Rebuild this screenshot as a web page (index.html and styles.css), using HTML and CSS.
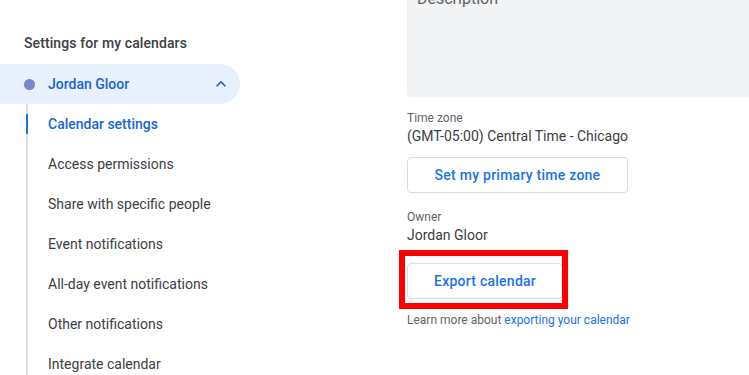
FILE: index.html
```html
<!DOCTYPE html>
<html lang="en">
<head>
<meta charset="utf-8">
<title>Calendar settings</title>
<link rel="stylesheet" href="styles.css">
</head>
<body>
<div class="page">
  <nav class="sidebar">
    <div class="side-heading">Settings for my calendars</div>
    <div class="cal-row">
      <span class="cal-left"><span class="cal-dot"></span><span class="cal-name">Jordan Gloor</span></span>
      <svg class="chev" width="20" height="20" viewBox="0 0 24 24" aria-hidden="true"><path d="M12 8l-6 6 1.41 1.41L12 10.83l4.59 4.58L18 14z" fill="#1967d2"/></svg>
    </div>
    <ul class="sublist">
      <li class="subitem active">Calendar settings</li>
      <li class="subitem">Access permissions</li>
      <li class="subitem">Share with specific people</li>
      <li class="subitem">Event notifications</li>
      <li class="subitem">All-day event notifications</li>
      <li class="subitem">Other notifications</li>
      <li class="subitem">Integrate calendar</li>
    </ul>
  </nav>
  <main class="main">
    <div class="desc-box"><span class="desc-placeholder">Description</span></div>
    <div class="field-label tz-label">Time zone</div>
    <div class="field-value">(GMT-05:00) Central Time - Chicago</div>
    <button class="btn btn-tz">Set my primary time zone</button>
    <div class="field-label owner-label">Owner</div>
    <div class="field-value">Jordan Gloor</div>
    <div class="export-wrap">
      <button class="btn btn-export">Export calendar</button>
      <span class="highlight-box"></span>
    </div>
    <div class="learn">Learn more about <a class="link" href="#">exporting your calendar</a></div>
  </main>
</div>
</body>
</html>
```
FILE: styles.css
```css
html, body {
  margin: 0;
  padding: 0;
  background: #ffffff;
  overflow: hidden;
}
body {
  font-family: Roboto, "Noto Sans", Arial, sans-serif;
  color: #3c4043;
  width: 749px;
  height: 375px;
}
.page {
  display: grid;
  grid-template-columns: 240px 342px;
  column-gap: 167px;
  align-items: start;
  height: 375px;
  overflow: hidden;
}
.sidebar {
  padding-top: 33px;
}
.side-heading {
  padding-left: 24px;
  font-size: 14px;
  font-weight: 500;
  line-height: 20px;
  color: #3c4043;
  letter-spacing: 0.1px;
  margin-bottom: 11px;
}
.cal-row {
  height: 40px;
  background: #e8f0fe;
  border-radius: 0 20px 20px 0;
  display: flex;
  align-items: center;
  justify-content: space-between;
  padding: 0 9px 0 24px;
}
.cal-left {
  display: flex;
  align-items: center;
}
.cal-dot {
  width: 11px;
  height: 11px;
  border-radius: 50%;
  background: #7986cb;
  margin-right: 13px;
}
.cal-name {
  font-size: 14px;
  font-weight: 500;
  color: #1967d2;
  line-height: 20px;
}
.chev {
  display: block;
}
.sublist {
  list-style: none;
  margin: 10px 0 0 26px;
  padding: 0;
  border-left: 2px solid #dadce0;
  height: 300px;
}
.subitem {
  position: relative;
  height: 40px;
  display: flex;
  align-items: center;
  padding-left: 20px;
  font-size: 14px;
  line-height: 20px;
  color: #3c4043;
}
.subitem:first-child {
  margin-top: -10px;
}
.subitem.active {
  color: #1967d2;
  font-weight: 500;
}
.subitem.active::before {
  content: "";
  position: absolute;
  left: -2px;
  top: 10px;
  width: 2px;
  height: 20px;
  background: #1a73e8;
}
.main {
  display: flex;
  flex-direction: column;
  align-items: flex-start;
}
.desc-box {
  box-sizing: border-box;
  width: 342px;
  height: 121px;
  margin-top: -24px;
  padding: 13px 10px 0;
  background: #f1f3f4;
  border-radius: 4px 0 0 4px;
}
.desc-placeholder {
  font-size: 16px;
  line-height: 20px;
  color: #5f6368;
}
.field-label {
  font-size: 12px;
  line-height: 16px;
  color: #5f6368;
}
.tz-label {
  margin-top: 13px;
}
.owner-label {
  margin-top: 16px;
}
.field-value {
  font-size: 14px;
  line-height: 20px;
  color: #3c4043;
}
.btn {
  box-sizing: border-box;
  height: 36px;
  padding: 0 24px;
  background: #ffffff;
  border: 1px solid #dadce0;
  border-radius: 4px;
  font-family: Roboto, "Noto Sans", Arial, sans-serif;
  font-size: 14px;
  font-weight: 500;
  letter-spacing: 0.25px;
  color: #1a73e8;
  cursor: pointer;
}
.btn-tz {
  width: 221px;
  margin-top: 11px;
}
.export-wrap {
  position: relative;
  margin-top: 18px;
}
.btn-export {
  display: block;
  width: 156px;
}
.highlight-box {
  position: absolute;
  left: -8px;
  top: -13px;
  width: 169px;
  height: 59px;
  box-sizing: border-box;
  border: 6px solid #ff0000;
}
.learn {
  margin-top: 13px;
  font-size: 12px;
  line-height: 16px;
  color: #5f6368;
}
.link {
  color: #1a73e8;
  text-decoration: none;
}
```
